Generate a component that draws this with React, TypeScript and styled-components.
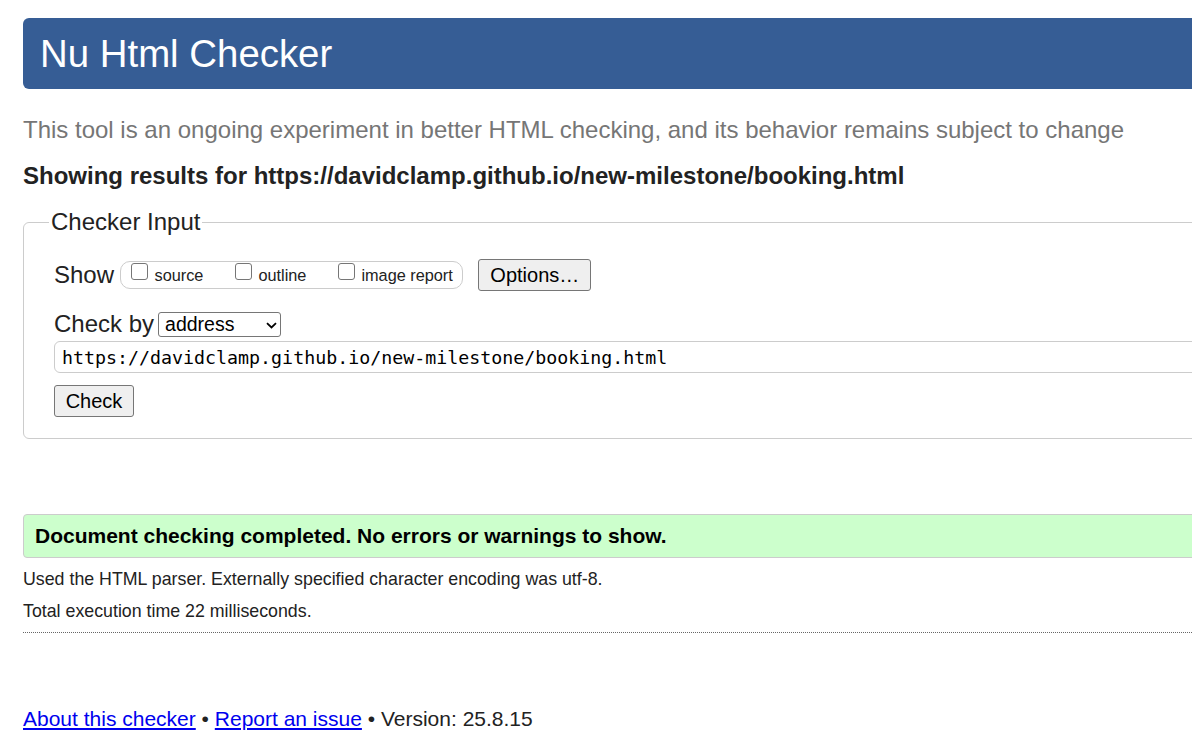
import React from "react";
import styled, { createGlobalStyle } from "styled-components";

const GlobalStyle = createGlobalStyle`
  html, body {
    margin: 0;
    padding: 0;
    overflow: hidden;
    background: #ffffff;
  }
  body {
    font-family: "Liberation Sans", Arial, sans-serif;
    color: #222222;
  }
`;

const Page = styled.div`
  width: 1320px;
  padding: 18px 0 40px 23px;
  box-sizing: border-box;
`;

const Header = styled.h1`
  margin: 0;
  height: 71px;
  line-height: 71px;
  padding-left: 17px;
  background: #365d95;
  color: #ffffff;
  font-size: 38.4px;
  font-weight: normal;
  border-radius: 6px 0 0 6px;
`;

const Subtitle = styled.p`
  margin: 26px 0 0;
  font-size: 24px;
  line-height: 30px;
  color: #767676;
`;

const Showing = styled.p`
  margin: 16px 0 0;
  font-size: 24px;
  line-height: 30px;
  font-weight: bold;
  color: #222222;
`;

const Fieldset = styled.fieldset`
  margin: 16px 0 0;
  padding: 22px 0 21px 30px;
  border: 1px solid #cccccc;
  border-radius: 6px;
  min-width: 0;
`;

const Legend = styled.legend`
  margin-left: -5px;
  padding: 0 2px;
  font-size: 24px;
  line-height: 30px;
  color: #222222;
`;

const Row = styled.div<{ $h: number; $mt?: number }>`
  display: flex;
  align-items: center;
  height: ${(p) => p.$h}px;
  margin-top: ${(p) => p.$mt ?? 0}px;
`;

const RowLabel = styled.span<{ $mr: number }>`
  font-size: 24px;
  line-height: 30px;
  margin-right: ${(p) => p.$mr}px;
`;

const OptionGroup = styled.span`
  display: flex;
  align-items: flex-start;
  box-sizing: border-box;
  height: 28px;
  padding: 0 9.5px 0 10px;
  border: 1px solid #cccccc;
  border-radius: 10px;
  gap: 31.5px;
`;

const OptionItem = styled.label`
  display: flex;
  align-items: flex-start;
  gap: 6.5px;
  font-size: 16.3px;
  line-height: 26px;
`;

const Checkbox = styled.input`
  appearance: none;
  margin: 1px 0 0;
  width: 17px;
  height: 17px;
  box-sizing: border-box;
  border: 1.5px solid #767676;
  border-radius: 3px;
  background: #ffffff;
`;

const Button = styled.button<{ $w: number; $ml?: number }>`
  box-sizing: border-box;
  width: ${(p) => p.$w}px;
  height: 32px;
  margin-left: ${(p) => p.$ml ?? 0}px;
  padding: 0;
  font-family: "Liberation Sans", Arial, sans-serif;
  font-size: 20px;
  color: #000000;
  background: #efefef;
  border: 1px solid #767676;
  border-radius: 3px;
`;

const SelectWrap = styled.span`
  position: relative;
  display: inline-block;
  width: 123px;
  height: 25px;
`;

const Select = styled.select`
  appearance: none;
  box-sizing: border-box;
  width: 100%;
  height: 100%;
  margin: 0;
  padding: 0 0 0 6px;
  font-family: "Liberation Sans", Arial, sans-serif;
  font-size: 19.5px;
  color: #000000;
  background: #ffffff;
  border: 1px solid #767676;
  border-radius: 3px;
`;

const Chevron = styled.svg`
  position: absolute;
  right: 4px;
  top: 10px;
  width: 11px;
  height: 7px;
  pointer-events: none;
`;

const UrlInput = styled.input`
  display: block;
  box-sizing: border-box;
  width: 100%;
  height: 32px;
  margin: 2px 0 0;
  padding: 0 0 0 7px;
  font-family: "DejaVu Sans Mono", "Liberation Mono", monospace;
  font-size: 18.3px;
  color: #000000;
  border: 1px solid #cccccc;
  border-radius: 6px;
  outline: none;
`;

const CheckRow = styled.div`
  margin-top: 12px;
`;

const Success = styled.div`
  margin-top: 75px;
  box-sizing: border-box;
  height: 44px;
  padding-left: 11px;
  line-height: 42px;
  font-size: 21px;
  font-weight: bold;
  color: #000000;
  background: #ccffcc;
  border: 1px solid #cccccc;
  border-radius: 4px;
`;

const Details = styled.div`
  display: flex;
  flex-direction: column;
  gap: 10px;
  padding: 10px 0 10px;
  border-bottom: 1px dotted #666666;
`;

const DetailLine = styled.p`
  margin: 0;
  font-size: 17.8px;
  line-height: 22px;
`;

const Footer = styled.p`
  margin: 73px 0 0;
  font-size: 21px;
  line-height: 26px;
`;

const FooterLink = styled.a`
  color: #0000ee;
  text-decoration: underline;
`;

export default function App() {
  const url = "https://davidclamp.github.io/new-milestone/booking.html";
  return (
    <>
      <GlobalStyle />
      <Page>
        <Header>Nu Html Checker</Header>
        <Subtitle>
          This tool is an ongoing experiment in better HTML checking, and its behavior remains subject to change
        </Subtitle>
        <Showing>Showing results for {url}</Showing>
        <Fieldset>
          <Legend>Checker Input</Legend>
          <Row $h={32}>
            <RowLabel $mr={6}>Show</RowLabel>
            <OptionGroup>
              <OptionItem>
                <Checkbox type="checkbox" />
                source
              </OptionItem>
              <OptionItem>
                <Checkbox type="checkbox" />
                outline
              </OptionItem>
              <OptionItem>
                <Checkbox type="checkbox" />
                image report
              </OptionItem>
            </OptionGroup>
            <Button type="button" $w={113} $ml={15}>
              Options…
            </Button>
          </Row>
          <Row $h={30} $mt={18}>
            <RowLabel $mr={4}>Check by</RowLabel>
            <SelectWrap>
              <Select defaultValue="address">
                <option value="address">address</option>
                <option value="file">file upload</option>
                <option value="text">text input</option>
              </Select>
              <Chevron viewBox="0 0 11 7">
                <path d="M1 1.2 L5.5 5.5 L10 1.2" fill="none" stroke="#000" strokeWidth="1.8" />
              </Chevron>
            </SelectWrap>
          </Row>
          <UrlInput type="text" defaultValue={url} />
          <CheckRow>
            <Button type="button" $w={80}>
              Check
            </Button>
          </CheckRow>
        </Fieldset>
        <Success>Document checking completed. No errors or warnings to show.</Success>
        <Details>
          <DetailLine>Used the HTML parser. Externally specified character encoding was utf-8.</DetailLine>
          <DetailLine>Total execution time 22 milliseconds.</DetailLine>
        </Details>
        <Footer>
          <FooterLink href="#about">About this checker</FooterLink> •{" "}
          <FooterLink href="#report">Report an issue</FooterLink> • Version: 25.8.15
        </Footer>
      </Page>
    </>
  );
}
